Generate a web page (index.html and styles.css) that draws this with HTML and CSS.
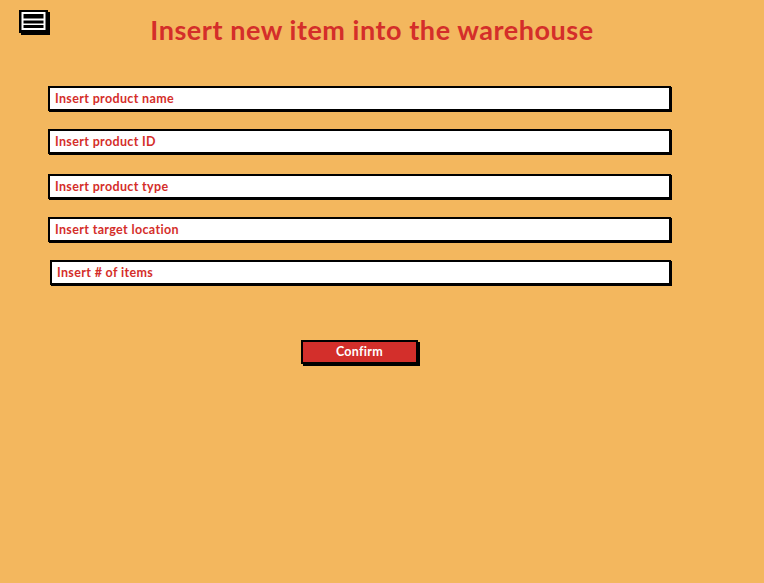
FILE: index.html
```html
<!DOCTYPE html>
<html>
<head>
<meta charset="utf-8">
<link rel="stylesheet" href="styles.css">
</head>
<body>
<div class="page">
  <header class="header">
    <svg class="menu-icon" width="34" height="28" viewBox="0 0 34 28">
      <rect x="3" y="3" width="29" height="23" fill="#000"/>
      <rect x="1" y="1" width="29" height="23" fill="#000"/>
      <rect x="4.5" y="4" width="22" height="16" fill="none" stroke="#fff" stroke-width="2"/>
      <rect x="4.5" y="9.5" width="22" height="2" fill="#fff"/>
      <rect x="4.5" y="14.5" width="22" height="1.5" fill="#fff"/>
    </svg>
    <h1 class="title">Insert new item into the warehouse</h1>
  </header>
  <form class="form">
    <div class="field">Insert product name</div>
    <div class="field">Insert product ID</div>
    <div class="field field-gap">Insert product type</div>
    <div class="field">Insert target location</div>
    <div class="field field-shift">Insert # of items</div>
    <div class="actions">
      <button type="button" class="confirm">Confirm</button>
    </div>
  </form>
</div>
</body>
</html>
```
FILE: styles.css
```css
html, body {
  margin: 0;
  padding: 0;
}
body {
  width: 764px;
  height: 583px;
  overflow: hidden;
  background: #f3b75e;
  font-family: "Lato", "Liberation Sans", sans-serif;
}
.page {
  position: relative;
  width: 764px;
  height: 583px;
  box-sizing: border-box;
}
.header {
  position: relative;
  height: 60px;
}
.menu-icon {
  position: absolute;
  left: 18px;
  top: 9px;
}
.title {
  margin: 0;
  padding: 13px 20px 0 0;
  text-align: center;
  font-size: 27px;
  font-weight: 700;
  color: #d42e2a;
  line-height: 34px;
  letter-spacing: 0.55px;
}
.form {
  display: flex;
  flex-direction: column;
  gap: 18px;
  margin: 26px 0 0 48px;
}
.field {
  height: 21px;
  border: 2px solid #000;
  box-shadow: 1px 1px 0 #000;
  background: #fff;
  color: #d42e2a;
  font-size: 12.5px;
  font-weight: 700;
  line-height: 21px;
  letter-spacing: 0.35px;
  padding-left: 5px;
  box-sizing: content-box;
  width: 614px;
}
.field-gap {
  margin-top: 2px;
}
.field-shift {
  margin-left: 2px;
  width: 612px;
}
.actions {
  display: flex;
  justify-content: flex-start;
  padding-left: 253px;
  margin-top: 37px;
}
.confirm {
  width: 117px;
  height: 24px;
  border: 2px solid #000;
  box-shadow: 2px 2px 0 #000;
  background: #d32f2b;
  color: #fff;
  font-family: "Lato", "Liberation Sans", sans-serif;
  font-size: 12.5px;
  font-weight: 700;
  letter-spacing: 0.3px;
  padding: 0;
  line-height: 20px;
}
```
